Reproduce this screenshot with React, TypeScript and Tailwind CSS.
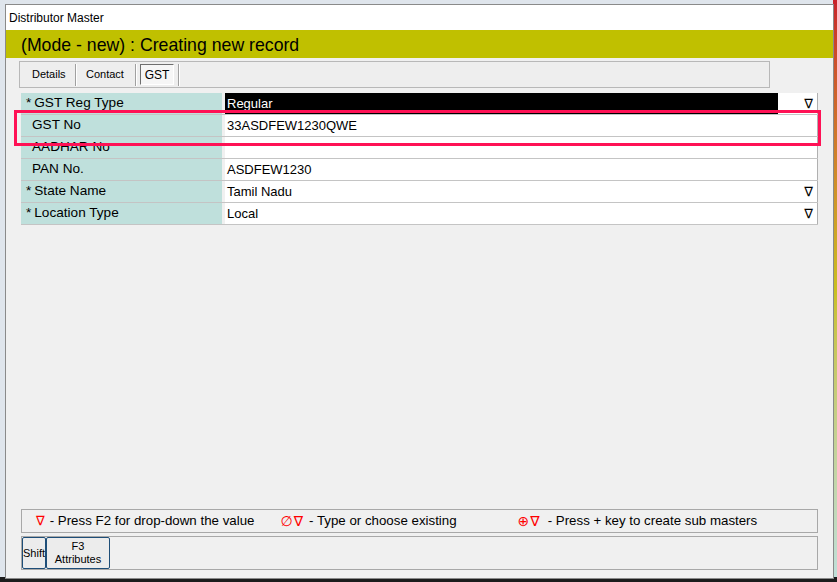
import React from 'react'

type Row = { label: string; star: boolean; value: string; drop: boolean; selected?: boolean }

const rows: Row[] = [
  { label: 'GST Reg Type', star: true, value: 'Regular', drop: true, selected: true },
  { label: 'GST No', star: false, value: '33ASDFEW1230QWE', drop: false },
  { label: 'AADHAR No', star: false, value: '', drop: false },
  { label: 'PAN No.', star: false, value: 'ASDFEW1230', drop: false },
  { label: 'State Name', star: true, value: 'Tamil Nadu', drop: true },
  { label: 'Location Type', star: true, value: 'Local', drop: true },
]

const font = { fontFamily: '"Liberation Sans", Arial, sans-serif' }
const sym = { fontFamily: '"DejaVu Sans", sans-serif' }

export default function App() {
  return (
    <div className="relative w-[837px] h-[582px] overflow-hidden bg-[#dfe5ec] text-black" style={font}>
      {/* desktop strips */}
      <div className="absolute right-0 top-0 w-[4px] h-[582px] bg-gradient-to-b from-[#c8202a] via-[#c8c020] to-[#bfe0dc]" />
      <div className="absolute left-0 bottom-0 w-[837px] h-[5px] bg-[#1b1b1b]" />

      <div className="absolute left-[5px] top-[4px] w-[829px] h-[575px] border border-[#8a8a8a] bg-[#f0f0f0] flex flex-col">
        <div className="h-[25px] bg-white flex items-center pl-[3px] text-[12px]">Distributor Master</div>
        <div className="h-[28px] bg-[#c0c000] flex items-center pl-[15px] text-[17.7px] pt-[2px]">
          (Mode - new) : Creating new record
        </div>

        <div className="ml-[13px] mt-[3px] w-[751px] h-[27px] border border-[#b8b8b8] bg-[#eeeeee] flex items-center text-[11px]">
          <span className="pl-[12px] w-[55px]">Details</span>
          <span className="w-[2px] h-[22px] border-l border-[#a0a0a0] bg-white" />
          <span className="pl-[9px] w-[58px]">Contact</span>
          <span className="w-[2px] h-[22px] border-l border-[#a0a0a0] bg-white" />
          <span className="ml-[3px] h-[21px] w-[34px] flex items-center justify-center border border-[#6e6e6e] border-b-white border-r-white bg-[#f6f6f6] text-[12px]">GST</span>
          <span className="ml-[4px] w-[2px] h-[22px] border-l border-[#a0a0a0] bg-white" />
        </div>

        <div className="ml-[15px] mt-[5px] w-[797px]">
          {rows.map((r) => (
            <div key={r.label} className="flex h-[22px] border-b border-[#c4c4c4]">
              <div className="w-[201px] bg-[#bfe0dc] flex items-center pl-[5px] text-[13.6px]">
                {r.star ? <span className="pr-[3px]">*</span> : <span className="w-[6px]" />}
                <span>{r.label}</span>
              </div>
              <div className="w-[3px] bg-[#f0f0f0]" />
              <div className="flex-1 bg-white border-r border-[#b0b0b0] flex items-center text-[13px]">
                <div className={`flex-1 h-full flex items-center pl-[2px] ${r.selected ? 'bg-black text-white' : ''}`}>
                  {r.value}
                </div>
                {r.drop && (
                  <span className="w-[39px] h-full flex items-center justify-end pr-[4px] text-[13px]" style={sym}>
                    ∇
                  </span>
                )}
              </div>
            </div>
          ))}
        </div>

        <div className="flex-1" />

        <div className="ml-[15px] w-[797px] h-[24px] border border-[#a8a8a8] flex items-center text-[13.3px]">
          <span className="pl-[14px] text-[#ff0000] text-[13px]" style={sym}>∇</span>
          <span className="pl-[5px]">- Press F2 for drop-down the value</span>
          <span className="pl-[26px] text-[#ff0000] text-[14px] tracking-[1px]" style={sym}>∅∇</span>
          <span className="pl-[5px]">- Type or choose existing</span>
          <span className="pl-[61px] text-[#ff0000] text-[14px] tracking-[1px]" style={sym}>⊕∇</span>
          <span className="pl-[7px]">- Press + key to create sub masters</span>
        </div>

        <div className="ml-[15px] mt-[3px] mb-[8px] w-[797px] h-[34px] border border-[#a8a8a8] flex items-center text-[11px]">
          <button className="h-[32px] w-[24px] overflow-hidden border border-[#1e4e78] rounded-[2px] bg-[#ececec] leading-none">Shift</button>
          <button className="h-[32px] w-[64px] border border-[#1e4e78] rounded-[2px] bg-[#ececec] leading-[13px] flex flex-col items-center justify-center">
            <span>F3</span>
            <span>Attributes</span>
          </button>
        </div>
      </div>

      {/* highlight annotation */}
      <div className="absolute left-[14px] top-[110px] w-[807px] h-[36px] border-[3px] border-[#ff1155]" />
    </div>
  )
}
